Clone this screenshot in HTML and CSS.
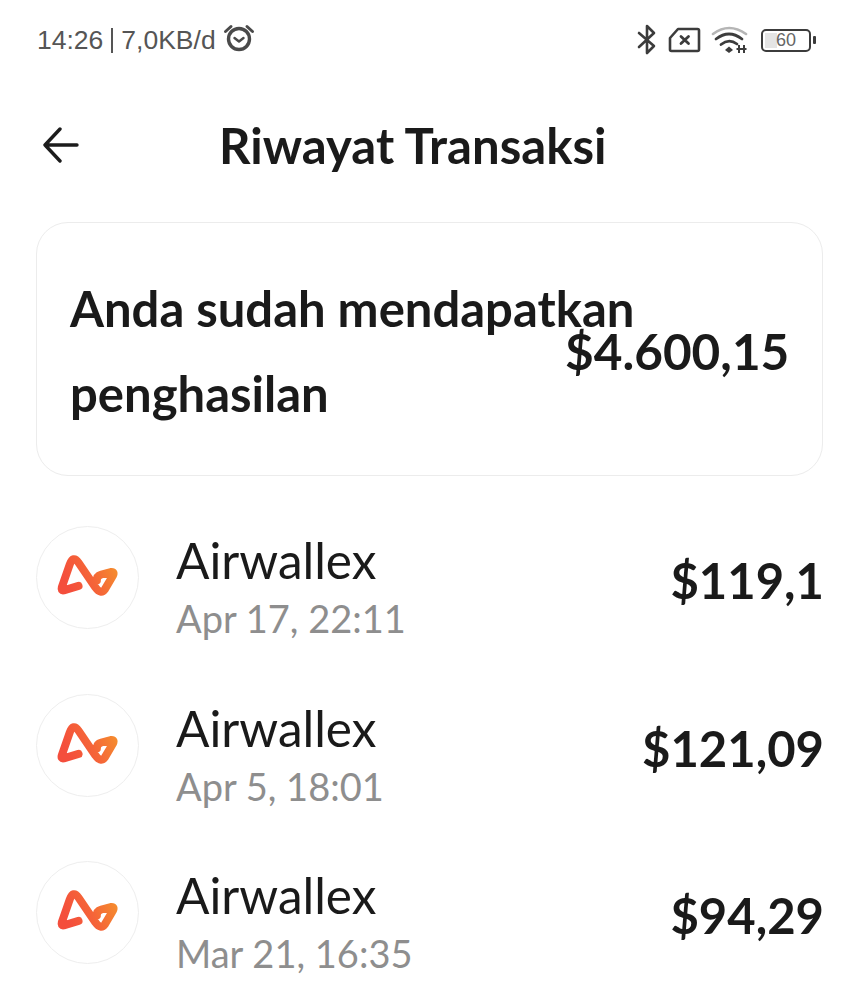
FILE: index.html
```html
<!DOCTYPE html>
<html lang="id">
<head>
    <meta charset="UTF-8">
    <meta name="viewport" content="width=device-width, initial-scale=1.0">
    <title>Riwayat Transaksi</title>
    <link rel="stylesheet" href="styles.css">
</head>
<body>
    <svg class="defs" width="0" height="0">
        <defs>
            <linearGradient id="logoGrad" x1="0" y1="0.4" x2="1" y2="0.1">
                <stop offset="0" stop-color="#f44e3c"/>
                <stop offset="0.5" stop-color="#f56538"/>
                <stop offset="1" stop-color="#f58d2e"/>
            </linearGradient>
            <symbol id="logo" viewBox="0 0 102 102">
                <path d="M42 59.5 L27 64 Q24 64.5 25 61 L33 38 Q36.5 28 42 36 L59 61 Q64.5 68.5 68.5 63 L76.5 49.5 Q79 45 74.5 45.5 L65 48 Q60 49.5 60.5 54" fill="none" stroke="url(#logoGrad)" stroke-width="8" stroke-linecap="round" stroke-linejoin="round"/>
            </symbol>
        </defs>
    </svg>

    <div class="statusbar">
        <div class="status-left">
            <span>14:26</span>
            <span class="sep"></span>
            <span>7,0KB/d</span>
            <svg class="ic-alarm" width="32" height="30" viewBox="0 0 32 30" fill="none" stroke="#4a4a4a">
                <circle cx="16" cy="16" r="10.5" stroke-width="3.4"/>
                <path d="M11.5 15 L16 18.5 L20.5 15" stroke-width="2.4" stroke-linecap="round" stroke-linejoin="round"/>
                <path d="M2.5 8.5 L8 3.5 M29.5 8.5 L24 3.5" stroke-width="3" stroke-linecap="round"/>
            </svg>
        </div>
        <div class="status-right">
            <svg class="ic-bt" width="20" height="32" viewBox="0 0 20 32" fill="none" stroke="#3c3c3c" stroke-width="2.6" stroke-linecap="round" stroke-linejoin="round">
                <path d="M2 9 L17 22 L10 29 L10 2 L17 9 L2 23"/>
            </svg>
            <svg width="33" height="26" viewBox="0 0 33 26" fill="none" stroke="#3c3c3c">
                <path d="M10 2 H29.5 Q31 2 31 3.5 V22.5 Q31 24 29.5 24 H3.5 Q2 24 2 22.5 V11 Z" stroke-width="2.6" stroke-linejoin="round"/>
                <path d="M13 9.5 L20.5 16.5 M20.5 9.5 L13 16.5" stroke-width="2.8" stroke-linecap="round"/>
            </svg>
            <svg width="38" height="30" viewBox="0 0 38 30" fill="none">
                <path d="M2 9 Q18 -3 35 9" stroke="#b5b5b5" stroke-width="2.6" stroke-linecap="round"/>
                <path d="M5 14 Q18 4 31 14" stroke="#3c3c3c" stroke-width="2.8" stroke-linecap="round"/>
                <path d="M10 19.5 Q18 13 26 19" stroke="#3c3c3c" stroke-width="2.8" stroke-linecap="round"/>
                <path d="M14 25 L18 21.5 L22 25 L18 28 Z" fill="#3c3c3c"/>
                <path d="M28 20 V28 M33 20 V28 M25.5 24 H35.5" stroke="#3c3c3c" stroke-width="2"/>
            </svg>
            <div class="battery-wrap">
                <div class="battery"><span class="battery-fill"></span><span class="battery-num">60</span></div>
                <span class="battery-tip"></span>
            </div>
        </div>
    </div>

    <div class="topbar">
        <svg class="back" width="36" height="36" viewBox="0 0 36 36" fill="none" stroke="#1c1c1c" stroke-width="3.4" stroke-linecap="round" stroke-linejoin="round">
            <path d="M34 18 H2 M17 2 L2 18 L17 34"/>
        </svg>
        <h1>Riwayat Transaksi</h1>
    </div>

    <div class="summary">
        <div class="summary-text">Anda sudah mendapatkan penghasilan</div>
        <div class="summary-amount">$4.600,15</div>
    </div>

    <div class="list">
        <div class="row">
            <div class="avatar"><svg width="101" height="101"><use href="#logo"/></svg></div>
            <div class="row-info">
                <div class="row-name">Airwallex</div>
                <div class="row-date">Apr 17, 22:11</div>
            </div>
            <div class="row-amount">$119,1</div>
        </div>
        <div class="row">
            <div class="avatar"><svg width="101" height="101"><use href="#logo"/></svg></div>
            <div class="row-info">
                <div class="row-name">Airwallex</div>
                <div class="row-date">Apr 5, 18:01</div>
            </div>
            <div class="row-amount">$121,09</div>
        </div>
        <div class="row">
            <div class="avatar"><svg width="101" height="101"><use href="#logo"/></svg></div>
            <div class="row-info">
                <div class="row-name">Airwallex</div>
                <div class="row-date">Mar 21, 16:35</div>
            </div>
            <div class="row-amount">$94,29</div>
        </div>
    </div>
</body>
</html>
```

FILE: styles.css
```css
* {
    margin: 0;
    padding: 0;
    box-sizing: border-box;
}

body {
    font-family: Lato, "Noto Sans", sans-serif;
    background-color: #fff;
    color: #1a1a1a;
    width: 859px;
    height: 1000px;
    overflow: hidden;
}

.defs {
    display: block;
}

/* status bar */
.statusbar {
    height: 78px;
    padding: 2px 43px 0 37px;
    display: flex;
    justify-content: space-between;
    align-items: center;
}

.status-left {
    display: flex;
    align-items: center;
    font-family: "Liberation Sans", Arial, sans-serif;
    font-size: 26.5px;
    color: #555;
}

.sep {
    width: 2px;
    height: 25px;
    background-color: #555;
    margin: 0 8px 0 8px;
}

.ic-alarm {
    margin-left: 7px;
    margin-top: -4px;
}

.status-right {
    display: flex;
    align-items: center;
    gap: 10px;
}

.ic-bt {
    margin-right: 1px;
}

.battery-wrap {
    display: flex;
    align-items: center;
    gap: 2px;
    margin-left: 2px;
}

.battery {
    width: 50px;
    height: 23px;
    border: 2.6px solid #3c3c3c;
    border-radius: 5px;
    display: flex;
    align-items: center;
    justify-content: center;
    overflow: hidden;
    position: relative;
}

.battery-fill {
    position: absolute;
    left: 2px;
    top: 2px;
    bottom: 2px;
    width: 12px;
    background-color: #e4e4e4;
}

.battery-num {
    position: relative;
    font-family: "Liberation Sans", Arial, sans-serif;
    font-size: 18px;
    color: #666;
}

.battery-tip {
    width: 3px;
    height: 8px;
    background-color: #3c3c3c;
    border-radius: 1px;
}

/* header */
.topbar {
    height: 134px;
    display: flex;
    align-items: center;
    padding-left: 43px;
}

.back {
    flex-shrink: 0;
}

h1 {
    font-size: 49.1px;
    font-weight: 700;
    margin-left: 140px;
    white-space: nowrap;
}

/* summary card */
.summary {
    margin: 10px 36px 0;
    height: 254px;
    border: 1.5px solid #ececec;
    border-radius: 32px;
    display: flex;
    align-items: center;
    padding: 0 33px;
}

.summary-text {
    width: 580px;
    flex-shrink: 0;
    font-size: 49px;
    font-weight: 700;
    line-height: 85px;
    padding-top: 4px;
}

.summary-amount {
    flex-shrink: 0;
    margin-left: -85px;
    margin-top: 4px;
    font-size: 49.5px;
    font-weight: 700;
}

/* transaction rows */
.list {
    margin-top: 50px;
    padding: 0 35px 0 36px;
    display: flex;
    flex-direction: column;
    gap: 64.5px;
}

.row {
    height: 103px;
    display: flex;
    align-items: center;
}

.avatar {
    width: 103px;
    height: 103px;
    flex-shrink: 0;
    border: 1.5px solid #eee;
    border-radius: 50%;
}

.avatar svg {
    display: block;
}

.row-info {
    margin-left: 37px;
    flex: 1;
    padding-top: 23px;
}

.row-name {
    font-size: 49.5px;
    line-height: 58px;
}

.row-date {
    font-size: 38px;
    line-height: 58px;
    color: #8e8e8e;
}

.row-amount {
    font-size: 49px;
    font-weight: 700;
    padding-top: 5px;
}
```
